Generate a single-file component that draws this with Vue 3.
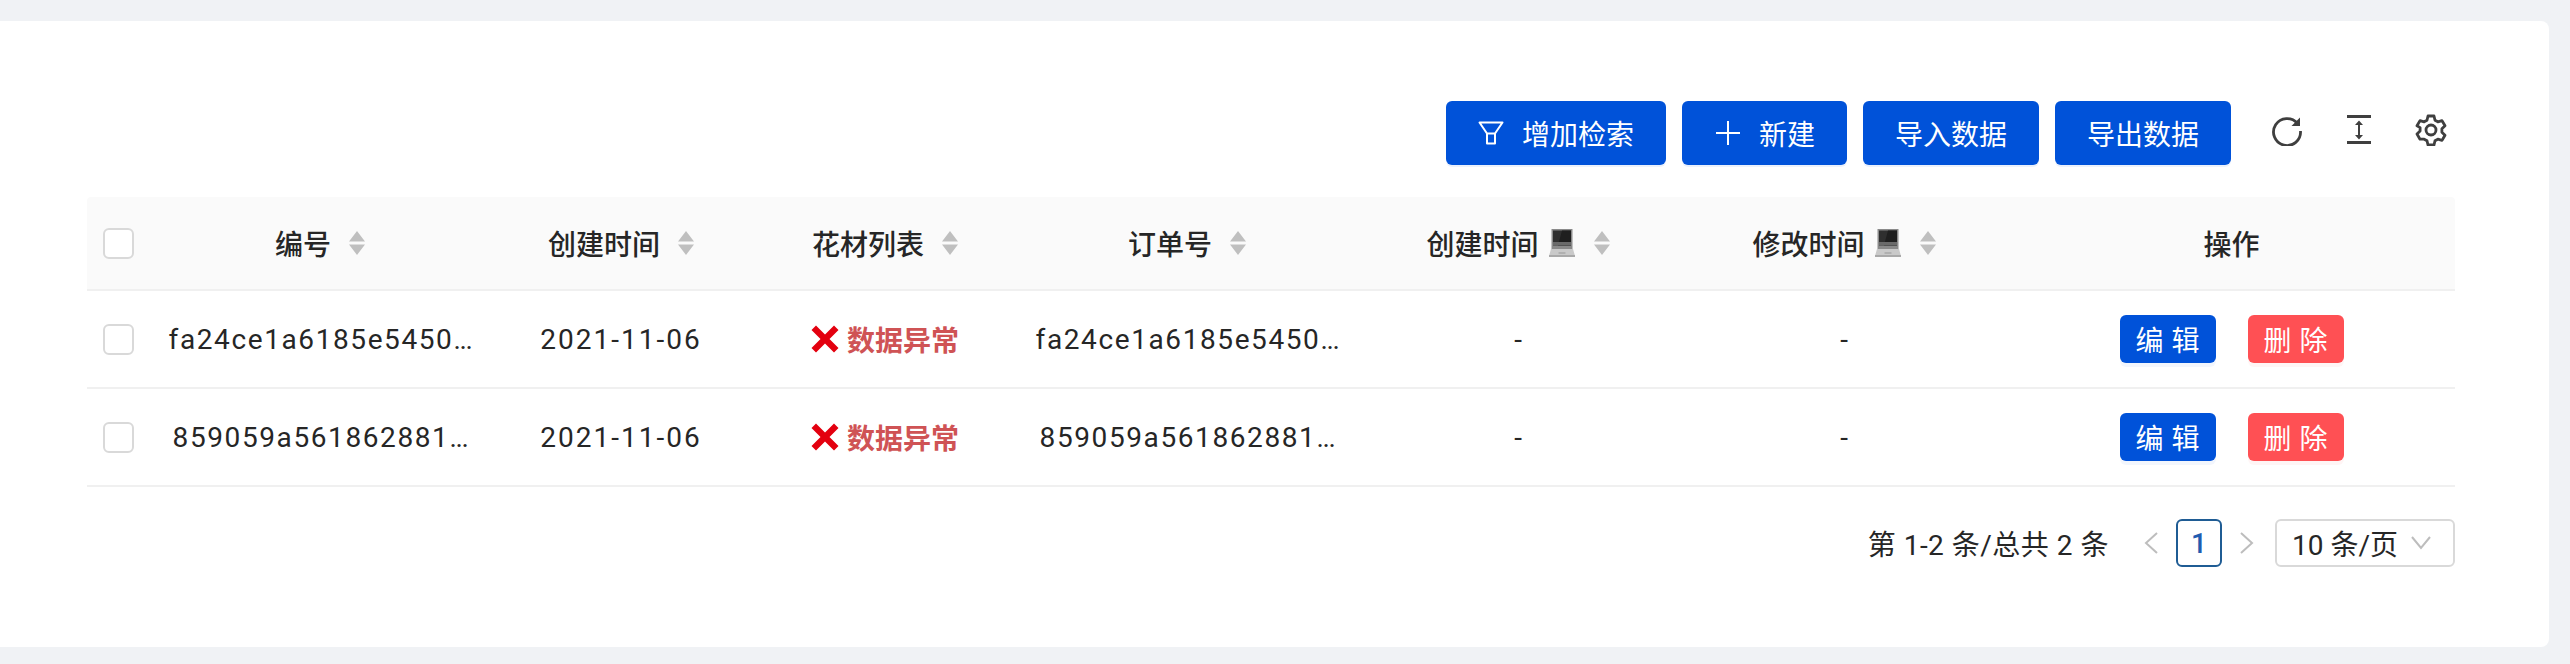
<script setup>
const columns = [
  { label: '编号', sort: true },
  { label: '创建时间', sort: true },
  { label: '花材列表', sort: true },
  { label: '订单号', sort: true },
  { label: '创建时间', sort: true, emoji: true },
  { label: '修改时间', sort: true, emoji: true },
  { label: '操作' },
]
const rows = [
  { id: 'fa24ce1a6185e5450', date: '2021-11-06' },
  { id: '859059a561862881', date: '2021-11-06' },
]
const widths = [63, 340, 262, 266, 338, 324, 328, 447]
</script>

<template>
  <div class="page">
    <div class="card">
      <div class="toolbar">
        <button class="btn">
          <svg class="ico" viewBox="0 0 26 24" width="26" height="24" fill="none" stroke="currentColor" stroke-width="2"><path d="M1.500 1.500h23L17 12.500H9zM9 12.500v10h8v-10" stroke-linejoin="round"/></svg>
          <span>增加检索</span>
        </button>
        <button class="btn btn-plus">
          <svg class="ico" viewBox="0 0 24 24" width="24" height="24" fill="none" stroke="currentColor" stroke-width="2"><path d="M12 0v24M0 12h24"/></svg>
          <span>新建</span>
        </button>
        <button class="btn"><span>导入数据</span></button>
        <button class="btn"><span>导出数据</span></button>
        <div class="tools">
          <svg viewBox="0 0 32 32" width="32" height="32" fill="none" stroke="#3f3f3f" stroke-width="2.800">
            <path d="M26.500 9.500A13.500 13.500 0 1 0 29.500 17"/>
            <path d="M29 3.500v8.500h-8.500z" fill="#3f3f3f" stroke="none"/>
          </svg>
          <svg viewBox="0 0 26 32" width="26" height="32" fill="none" stroke="#3f3f3f">
            <path d="M1 2.500h24M1 28.500h24" stroke-width="2.800"/>
            <path d="M13 8v16" stroke-width="2"/>
            <path d="M9 11 13 6.500 17 11zM9 21l4 4.500 4-4.500z" fill="#3f3f3f" stroke="none"/>
          </svg>
          <svg viewBox="0 0 32 32" width="32" height="32" fill="none" stroke="#3f3f3f" stroke-width="2.800" stroke-linejoin="round">
            <path d="M13 2h6l1 4.200 2.800 1.600 4.200-1.200 3 5.200-3.100 3v3.400l3.100 3-3 5.200-4.200-1.200-2.800 1.600-1 4.200h-6l-1-4.200-2.800-1.600L5 25.200l-3-5.200 3.100-3v-3.400L2 11.800l3-5.200 4.200 1.200L12 6.200z"/>
            <circle cx="16" cy="16" r="5"/>
          </svg>
        </div>
      </div>

      <table class="table">
        <colgroup>
          <col v-for="(w, i) in widths" :key="i" :style="{ width: w + 'px' }" />
        </colgroup>
        <thead>
          <tr>
            <th class="check-cell"><span class="checkbox"></span></th>
            <th v-for="(c, i) in columns" :key="i">
              <span class="head">
                <span>{{ c.label }}</span>
                <svg v-if="c.emoji" class="laptop" viewBox="0 0 28 28" width="28" height="28">
                  <path d="M3.500 0h21v20h-21z" fill="#8a8a8a"/>
                  <path d="M5 1.500h18v15H5z" fill="#2f2f2f"/>
                  <path d="M14 1.500h9v15H10z" fill="#1f1f1f"/>
                  <path d="M5 13h18v3.500H5z" fill="#6a6a6a"/>
                  <path d="M3 20h22l2 7H1z" fill="#c9c9c9"/>
                  <path d="M1 26h26v2H1z" fill="#a9a9a9"/>
                  <path d="M10.500 23h7v2h-7z" fill="#b0b0b0"/>
                </svg>
                <svg v-if="c.sort" class="sorter" viewBox="0 0 16 24" width="16" height="24" fill="#bfbfbf">
                  <path d="M8 0l8 10.500H0zM8 24l8-10.500H0z"/>
                </svg>
              </span>
            </th>
          </tr>
        </thead>
        <tbody>
          <tr v-for="r in rows" :key="r.id">
            <td class="check-cell"><span class="checkbox"></span></td>
            <td class="id">{{ r.id }}<span class="dots">...</span></td>
            <td class="data">{{ r.date }}</td>
            <td>
              <span class="status">
                <svg viewBox="0 0 28 28" width="28" height="28">
                  <path d="M5 0.500 14 9.500 23 0.500 27.500 5 18.500 14 27.500 23 23 27.500 14 18.500 5 27.500 0.500 23 9.500 14 0.500 5z" fill="#e3000f"/>
                </svg>
                <span>数据异常</span>
              </span>
            </td>
            <td class="id">{{ r.id }}<span class="dots">...</span></td>
            <td>-</td>
            <td>-</td>
            <td>
              <span class="actions">
                <button class="mini primary">编辑</button>
                <button class="mini danger">删除</button>
              </span>
            </td>
          </tr>
        </tbody>
      </table>

      <div class="pager">
        <span class="total">第 1-2 条/总共 2 条</span>
        <svg class="arrow" viewBox="0 0 14 24" width="14" height="24" fill="none" stroke="#bdbdbd" stroke-width="2"><path d="M13 2 2 12l11 10"/></svg>
        <span class="current">1</span>
        <svg class="arrow" viewBox="0 0 14 24" width="14" height="24" fill="none" stroke="#bdbdbd" stroke-width="2"><path d="M1 2l11 10L1 22"/></svg>
        <span class="select">
          <span>10 条/页</span>
          <svg viewBox="0 0 20 14" width="20" height="14" fill="none" stroke="#bdbdbd" stroke-width="2"><path d="M1 1l9 11 9-11"/></svg>
        </span>
      </div>
    </div>
  </div>
</template>

<style>
html, body { margin: 0; background: #f0f2f5; }
</style>

<style scoped>
.page {
  height: 664px;
  padding: 21px 21px 17px 0;
  box-sizing: border-box;
  background: #f0f2f5;
  font-family: Roboto, "Noto Sans CJK SC", sans-serif;
  color: #262626;
  font-size: 28px;
}
.card {
  height: 626px;
  box-sizing: border-box;
  padding: 80px 94px 0 87px;
  background: #fff;
  border-radius: 0 8px 8px 0;
}
.toolbar {
  display: flex;
  align-items: center;
  justify-content: flex-end;
  gap: 16px;
}
.btn {
  height: 64px;
  padding: 0 32px;
  display: flex;
  align-items: center;
  gap: 18px;
  border: 0;
  border-radius: 6px;
  background: #0052d9;
  color: #fff;
  font: inherit;
  box-shadow: 0 2px 0 rgba(0, 82, 217, .08);
}
.btn-plus { padding-left: 34px; gap: 19px; }
.ico { flex: none; }
.tools {
  display: flex;
  align-items: center;
  gap: 43px;
  margin: 0 8px 6px 24px;
}
.table {
  width: 100%;
  margin-top: 32px;
  table-layout: fixed;
  border-collapse: separate;
  border-spacing: 0;
}
th, td {
  padding: 0 16px;
  text-align: center;
  white-space: nowrap;
  border-bottom: 2px solid #f0f0f0;
  box-sizing: border-box;
}
th {
  height: 94px;
  background: #fafafa;
  font-weight: 500;
}
th:first-child { border-top-left-radius: 4px; }
th:last-child { border-top-right-radius: 4px; }
td { height: 98px; }
.data { letter-spacing: 2px; }
.id { letter-spacing: 1.6px; }
.dots { letter-spacing: -1.4px; }
.check-cell { padding: 0 0 0 16px; text-align: left; line-height: 0; }
.checkbox {
  display: inline-block;
  width: 31px;
  height: 31px;
  box-sizing: border-box;
  border: 2px solid #d9d9d9;
  border-radius: 6px;
  background: #fff;
}
.head {
  display: inline-flex;
  align-items: center;
}
.laptop { margin-left: 9px; }
.sorter { margin-left: 18px; }
.status {
  display: inline-flex;
  align-items: center;
  gap: 8px;
  color: #cf5355;
  font-weight: 700;
}
.actions {
  display: inline-flex;
  gap: 32px;
}
.mini {
  width: 96px;
  height: 48px;
  padding: 0 0 0 8px;
  border: 0;
  border-radius: 6px;
  color: #fff;
  font: inherit;
  letter-spacing: 8px;
}
.primary { background: #0052d9; box-shadow: 0 4px 0 rgba(0, 82, 217, .05); }
.danger { background: #ff5054; box-shadow: 0 4px 0 rgba(255, 80, 84, .06); }
.pager {
  display: flex;
  align-items: center;
  justify-content: flex-end;
  margin-top: 32px;
  height: 48px;
}
.arrow { flex: none; }
.total { margin-right: 35px; letter-spacing: .5px; }
.current {
  width: 46px;
  height: 48px;
  margin: 0 18px;
  box-sizing: border-box;
  display: flex;
  align-items: center;
  justify-content: center;
  border: 2px solid #1f5c94;
  border-radius: 6px;
  color: #1f5cb0;
  font-weight: 500;
}
.select {
  width: 180px;
  height: 48px;
  margin-left: 21px;
  box-sizing: border-box;
  display: flex;
  align-items: center;
  justify-content: space-between;
  padding: 0 22px 0 15px;
  border: 2px solid #d9d9d9;
  border-radius: 6px;
}
</style>
